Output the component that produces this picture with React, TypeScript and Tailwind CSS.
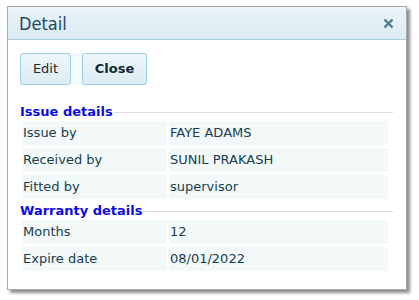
import React from "react";

const issueRows = [
  { label: "Issue by", value: "FAYE ADAMS" },
  { label: "Received by", value: "SUNIL PRAKASH" },
  { label: "Fitted by", value: "supervisor" },
];

const warrantyRows = [
  { label: "Months", value: "12" },
  { label: "Expire date", value: "08/01/2022" },
];

function Legend({ title }: { title: string }) {
  return (
    <div className="flex items-center h-[16px] w-[373px]">
      <span className="text-[13px] leading-[16px] font-bold text-[#0c0ce0] pr-px">{title}</span>
      <div className="flex-1 h-px bg-[#dcdcdc]" />
    </div>
  );
}

function DetailRows({ rows }: { rows: { label: string; value: string }[] }) {
  return (
    <div className="grid grid-cols-[145px_219px] gap-x-[2px] gap-y-[3px] pl-[2px] mt-px">
      {rows.map((r) => (
        <React.Fragment key={r.label}>
          <div className="h-[24px] flex items-center pl-px bg-[#f3f9f9] text-[13px] text-[#163d4e]">
            {r.label}
          </div>
          <div className="h-[24px] flex items-center pl-px bg-[#f3f9f9] text-[13px] text-[#163d4e]">
            {r.value}
          </div>
        </React.Fragment>
      ))}
    </div>
  );
}

export default function App() {
  return (
    <div
      className="w-[419px] h-[300px] bg-white pl-[7px] pt-[6px]"
      style={{ fontFamily: '"DejaVu Sans", Verdana, sans-serif' }}
    >
      {/* Dialog */}
      <div className="w-[400px] h-[284px] bg-white border border-[#a9a9a9] shadow-[3px_3px_3px_rgba(0,0,0,0.45)]">
        {/* Header */}
        <div className="h-[33px] flex items-center justify-between pl-[11px] pr-[12px] border-b border-[#a7cfe1] bg-gradient-to-b from-[#eaf4f9] to-[#dbebf3]">
          <span
            className="text-[18px] leading-none text-[#1c4b62] mt-px"
            style={{ fontFamily: '"DejaVu Sans Condensed", Tahoma, sans-serif' }}
          >
            Detail
          </span>
          <svg width="11" height="11" viewBox="0 0 11 11" className="mt-px">
            <path d="M1.5 1.5 L9.5 9.5 M9.5 1.5 L1.5 9.5" stroke="#4a7a90" strokeWidth="2.4" />
          </svg>
        </div>

        <div className="pl-[12px] pt-[13px]">
          {/* Toolbar */}
          <div className="inline-flex gap-[11px] bg-[#f4f9fa]">
            <button className="h-[32px] w-[51px] rounded-[3px] border border-[#9fcde1] bg-gradient-to-b from-[#eef6fa] to-[#dcebf3] text-[13px] text-[#1e2a30]">
              Edit
            </button>
            <button className="h-[32px] w-[65px] rounded-[3px] border border-[#9fcde1] bg-gradient-to-b from-[#eef6fa] to-[#dcebf3] text-[13px] font-bold text-[#102a36]">
              Close
            </button>
          </div>

          {/* Issue details */}
          <div className="mt-[19px]">
            <Legend title="Issue details" />
            <DetailRows rows={issueRows} />
          </div>

          {/* Warranty details */}
          <div className="mt-[4px]">
            <Legend title="Warranty details" />
            <DetailRows rows={warrantyRows} />
          </div>
        </div>
      </div>
    </div>
  );
}
